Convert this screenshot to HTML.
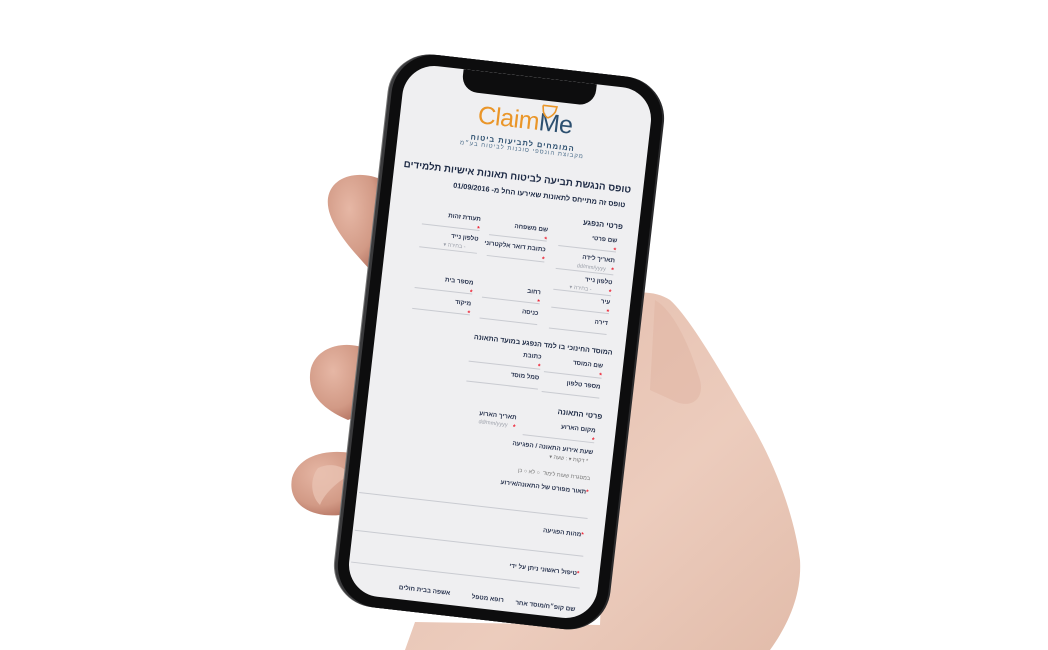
<!DOCTYPE html>
<html><head><meta charset="utf-8">
<style>
html,body{margin:0;padding:0;background:#fff;width:1048px;height:650px;overflow:hidden;position:relative;font-family:"Liberation Sans","DejaVu Sans",sans-serif;}
#hand{position:absolute;left:0;top:0}
#phone{position:absolute;left:364px;top:64px;width:272px;height:556px;border-radius:42px;background:#0d0d0e;transform:rotate(6.5deg);transform-origin:136px 278px;box-shadow:-3px 0 0 #3a3a3c, -4px 0 0 #777, 2px 0 0 #2a2a2c;}
#screen{position:absolute;left:11px;top:11px;width:250px;height:534px;border-radius:32px;background:#efeff1;overflow:hidden;direction:rtl;}
#notch{position:absolute;left:58px;top:0;width:134px;height:22px;background:#0d0d0e;border-radius:0 0 16px 16px;}
.a{position:absolute;white-space:nowrap;color:#1d2a45;font-weight:bold;}
.l{position:absolute;font-size:6.3px;font-weight:bold;color:#2a3550;white-space:nowrap;text-align:right;width:58px;}
.l i{font-style:normal;color:#e23;position:absolute;right:0;top:10px;font-size:7px}
.u{position:absolute;height:1px;background:#c9cbd1;width:58px;}
.p{position:absolute;font-size:5.5px;color:#9a9ea8;white-space:nowrap}
</style></head><body>
<svg id="hand" width="1048" height="650" viewBox="0 0 1048 650">
<defs>
<radialGradient id="g1" cx="0.4" cy="0.35" r="0.7"><stop offset="0" stop-color="#e6b7a5"/><stop offset="0.7" stop-color="#d29a86"/><stop offset="1" stop-color="#b87866"/></radialGradient>
<linearGradient id="g2" x1="0" y1="0" x2="1" y2="1"><stop offset="0" stop-color="#e3bbaa"/><stop offset="0.6" stop-color="#ecccbd"/><stop offset="1" stop-color="#e2bcaa"/></linearGradient>
</defs>
<path d="M612 300 C630 290 655 290 670 300 C690 318 720 370 752 425 C778 470 795 520 800 560 C802 595 788 625 770 650 L405 650 L415 622 L600 625 Z" fill="url(#g2)"/>
<path d="M655 300 C672 310 688 340 700 380 C705 400 690 410 672 400 L650 390 Z" fill="#e0b3a2" opacity="0.5"/>
<path d="M382 180 C362 170 332 174 328 198 C325 222 352 250 372 272 Z" fill="url(#g1)"/>
<path d="M368 350 C350 340 318 344 311 368 C305 395 325 410 348 420 L360 415 Z" fill="url(#g1)"/>
<path d="M362 456 C340 448 300 450 292 478 C287 505 312 518 340 515 L356 512 Z" fill="url(#g1)"/>
<path d="M318 468 C330 462 345 466 350 475 C340 480 325 492 320 505 C310 495 310 478 318 468 Z" fill="#e8c2b2" opacity="0.8"/>
</svg>
<div id="phone">
<div id="screen">
<div id="notch"></div>
<div class="a" style="left:0;width:250px;top:30px;text-align:center;direction:ltr;font-size:25px;font-weight:normal;letter-spacing:-0.5px"><span style="color:#ea9629">Claim</span><span style="color:#2c4f6f">Me</span></div>
<svg style="position:absolute;left:139px;top:25px" width="18" height="16" viewBox="0 0 18 16"><path d="M2 2 L16 2 L15 7 C13 11 10 13 8 14 M2 2 L3 8 C4 11 6 13 8 14" stroke="#ea9629" stroke-width="1.6" fill="none"/></svg>
<div class="a" style="left:0;width:250px;top:62px;text-align:center;font-size:7.5px;color:#2c4f6f;letter-spacing:1px">המומחים לתביעות ביטוח</div>
<div class="a" style="left:0;width:250px;top:71px;text-align:center;font-size:6px;color:#4e6f8c;font-weight:normal;letter-spacing:1px">מקבוצת הונספי סוכנות לביטוח בע״מ</div>
<div class="a" style="right:12px;top:96px;font-size:9.8px">טופס הנגשת תביעה לביטוח תאונות אישיות תלמידים</div>
<div class="a" style="right:16px;top:112px;font-size:7.3px">טופס זה מתייחס לתאונות שאירעו החל מ- 01/09/2016</div>
<div class="a" style="right:16px;top:134px;font-size:7.5px">פרטי הנפגע</div>

<div class="l" style="right:20px;top:150px">שם פרטי<i>*</i></div><div class="u" style="right:20px;top:164px"></div>
<div class="l" style="right:90px;top:147px">שם משפחה<i>*</i></div><div class="u" style="right:90px;top:161px"></div>
<div class="l" style="right:158px;top:144px">תעודת זהות<i>*</i></div><div class="u" style="right:158px;top:158px"></div>

<div class="l" style="right:20px;top:170px">תאריך לידה<i>*</i></div><div class="p" style="right:28px;top:180px">dd/mm/yyyy</div><div class="u" style="right:20px;top:187px"></div>
<div class="l" style="right:90px;top:167px">כתובת דואר אלקטרוני<i>*</i></div><div class="u" style="right:90px;top:182px"></div>
<div class="l" style="right:158px;top:164px">טלפון נייד</div><div class="p" style="right:170px;top:174px">- בחירה ▾</div><div class="u" style="right:158px;top:181px"></div>

<div class="l" style="right:20px;top:192px">טלפון נייד<i>*</i></div><div class="p" style="right:40px;top:202px">- בחירה ▾</div><div class="u" style="right:20px;top:208px"></div>
<div class="l" style="right:20px;top:212px">עיר<i>*</i></div><div class="u" style="right:20px;top:226px"></div>
<div class="l" style="right:90px;top:210px">רחוב<i>*</i></div><div class="u" style="right:90px;top:224px"></div>
<div class="l" style="right:158px;top:208px">מספר בית<i>*</i></div><div class="u" style="right:158px;top:222px"></div>
<div class="l" style="right:20px;top:233px">דירה</div><div class="u" style="right:20px;top:247px"></div>
<div class="l" style="right:90px;top:231px">כניסה</div><div class="u" style="right:90px;top:245px"></div>
<div class="l" style="right:158px;top:229px">מיקוד<i>*</i></div><div class="u" style="right:158px;top:243px"></div>

<div class="a" style="right:12px;top:262px;font-size:7px">המוסד החינוכי בו למד הנפגע במועד התאונה</div>
<div class="l" style="right:20px;top:276px">שם המוסד<i>*</i></div><div class="u" style="right:20px;top:291px"></div>
<div class="l" style="right:82px;top:274px">כתובת<i>*</i></div><div class="u" style="right:82px;top:289px;width:72px"></div>
<div class="l" style="right:20px;top:297px">מספר טלפון</div><div class="u" style="right:20px;top:311px"></div>
<div class="l" style="right:82px;top:295px">סמל מוסד</div><div class="u" style="right:82px;top:309px;width:72px"></div>

<div class="a" style="right:15px;top:325px;font-size:7.5px">פרטי התאונה</div>
<div class="l" style="right:20px;top:341px">מקום הארוע<i>*</i></div><div class="u" style="right:20px;top:356px;width:72px"></div>
<div class="l" style="right:100px;top:337px">תאריך הארוע<i>*</i></div><div class="p" style="right:108px;top:346px">dd/mm/yyyy</div>
<div class="l" style="right:20px;top:363px;width:90px">שעת אירוע התאונה / הפגיעה</div>
<div class="p" style="right:24px;top:373px;color:#777">* דקות ▾ : שעה ▾</div>
<div class="p" style="right:20px;top:390px;color:#777">במסגרת שעות לימוד &nbsp;○ לא ○ כן</div>
<div class="l" style="right:20px;top:403px;width:120px"><span style="color:#e23">*</span>תאור מפורט של התאונה/אירוע</div>
<div class="u" style="right:18px;top:432px;width:230px"></div>
<div class="l" style="right:20px;top:446px"><span style="color:#e23">*</span>מהות הפגיעה</div>
<div class="u" style="right:18px;top:470px;width:230px"></div>
<div class="l" style="right:20px;top:485px;width:90px"><span style="color:#e23">*</span>טיפול ראשוני ניתן על ידי</div>
<div class="u" style="right:18px;top:502px;width:230px"></div>
<div class="l" style="right:20px;top:521px;width:70px">שם קופ״ח/מוסד אחר</div>
<div class="l" style="right:92px;top:520px">רופא מטפל</div>
<div class="l" style="right:146px;top:519px;width:80px">אשפה בבית חולים</div>
</div>
</div>
</body></html>
